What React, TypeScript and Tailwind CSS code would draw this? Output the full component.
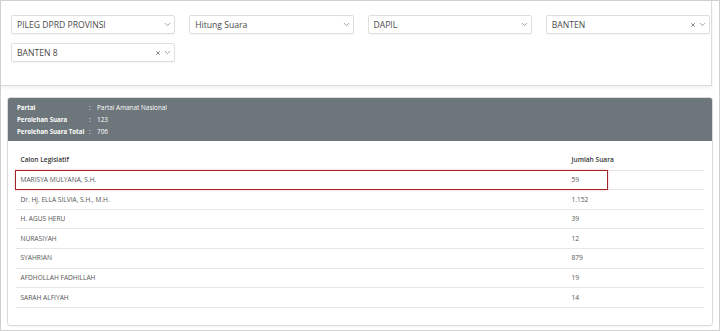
import { ChevronDown, X } from 'lucide-react';

type Filter = { label: string; clearable?: boolean };

const filters: Filter[] = [
  { label: 'PILEG DPRD PROVINSI' },
  { label: 'Hitung Suara' },
  { label: 'DAPIL' },
  { label: 'BANTEN', clearable: true },
  { label: 'BANTEN 8', clearable: true },
];

const rows = [
  { name: 'MARISYA MULYANA, S.H.', votes: '59', marked: true },
  { name: 'Dr. Hj. ELLA SILVIA, S.H., M.H.', votes: '1.152' },
  { name: 'H. AGUS HERU', votes: '39' },
  { name: 'NURASIYAH', votes: '12' },
  { name: 'SYAHRIAN', votes: '879' },
  { name: 'AFDHOLLAH FADHILLAH', votes: '19' },
  { name: 'SARAH ALFIYAH', votes: '14' },
];

const summary = [
  { label: 'Partai', value: 'Partai Amanat Nasional' },
  { label: 'Perolehan Suara', value: '123' },
  { label: 'Perolehan Suara Total', value: '706' },
];

function Select({ label, clearable }: Filter) {
  return (
    <div className="h-[19px] flex items-center bg-white border border-[#dedede] rounded-[2px] shadow-[0_1px_1px_rgba(0,0,0,0.04)] pl-[5px] pr-[2px]">
      <span className="flex-1 text-[8.6px] text-[#4a4a4a] leading-[12px] whitespace-nowrap">{label}</span>
      {clearable && <X className="w-[6px] h-[6px] text-[#777] mr-[2px]" strokeWidth={3.5} />}
      <ChevronDown className="w-[9px] h-[9px] text-[#8a8a8a]" strokeWidth={2.2} />
    </div>
  );
}

function App() {
  return (
    <div className="w-[720px] h-[331px] flex flex-col bg-white border border-[#cfcfcf] overflow-hidden font-['Open_Sans',sans-serif]">
      <div className="w-[711px] h-[85px] shrink-0 grid grid-cols-4 gap-x-[14px] gap-y-[9px] content-start pl-[10px] pr-[1px] pt-[14px] border-r border-b border-[#dcdcdc] shadow-[0_2px_3px_rgba(0,0,0,0.06)]">
        {filters.map((f) => (
          <Select key={f.label} {...f} />
        ))}
      </div>

      <div className="flex-1 flex flex-col mt-[11px] ml-[6px] mr-[6px] mb-[4px] border border-[#dcdcdc] rounded-[3px] shadow-[0_1px_2px_rgba(0,0,0,0.05)] overflow-hidden">
        <div className="h-[43px] shrink-0 bg-[#6c767b] pl-[9px] pt-[4px] text-white text-[6.4px] leading-[12px]">
          {summary.map((s) => (
            <div key={s.label} className="flex">
              <span className="w-[72px] font-bold text-[6.1px] whitespace-nowrap">{s.label}</span>
              <span className="w-[8px]">:</span>
              <span>{s.value}</span>
            </div>
          ))}
        </div>

        <div className="flex-1 px-[8px] pt-[10px] text-[6.6px] text-[#555]">
          <div className="h-[19.6px] flex items-center border-b border-[#e6e6e6] font-semibold text-[#333]">
            <span className="w-[551px] pl-[4.5px]">Calon Legislatif</span>
            <span className="pl-[4.5px]">Jumlah Suara</span>
          </div>
          {rows.map((r) => (
            <div key={r.name} className="relative h-[19.6px] flex items-center border-b border-[#e6e6e6]">
              <span className="w-[551px] pl-[4.5px]">{r.name}</span>
              <span className="pl-[4.5px]">{r.votes}</span>
              {r.marked && (
                <div className="absolute left-[-1px] top-[-1px] bottom-[-1px] w-[593px] border border-[#a3252b] shadow-[0_0_2px_rgba(163,37,43,0.35)]" />
              )}
            </div>
          ))}
        </div>
      </div>
    </div>
  );
}

export default App;
